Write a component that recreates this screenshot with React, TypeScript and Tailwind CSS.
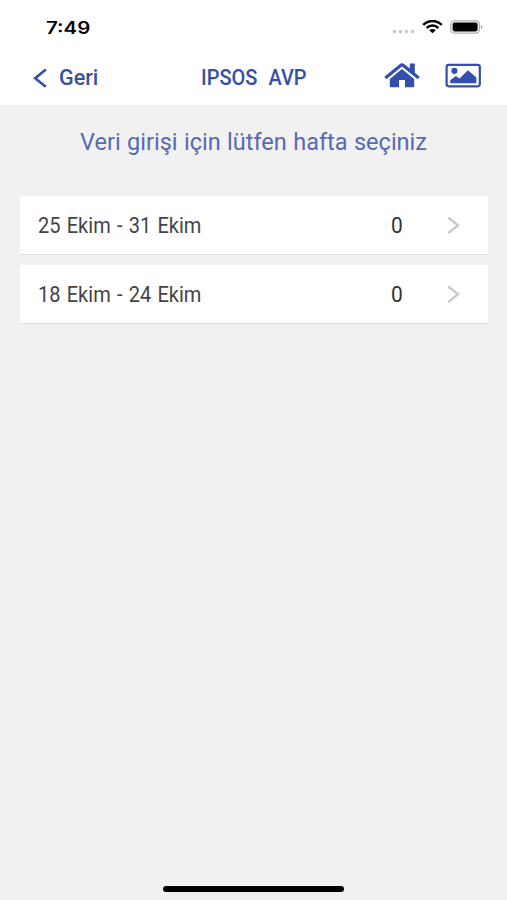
import React from 'react';

const weeks = [
  { label: '25 Ekim - 31 Ekim', count: 0 },
  { label: '18 Ekim - 24 Ekim', count: 0 },
];

function StatusBar() {
  return (
    <div className="flex h-[52px] items-start justify-between pl-[46px] pr-[23px]">
      <span className="mt-[16px] inline-block origin-left scale-x-[1.2] font-['Inter',sans-serif] text-[17px] font-semibold leading-6 text-black">
        7:49
      </span>
      <div className="mt-[20px] flex items-start">
        <svg width="24" height="14" viewBox="0 0 24 14" fill="#c8c8c8">
          <circle cx="2.5" cy="11.6" r="1.8" />
          <circle cx="8.5" cy="11.6" r="1.8" />
          <circle cx="14.5" cy="11.6" r="1.8" />
          <circle cx="20.5" cy="11.6" r="1.8" />
        </svg>
        <svg className="ml-[6px]" width="21" height="14" viewBox="0 0 21 14" fill="none" stroke="#000" strokeWidth="2.5">
          <path d="M1.2 4.9C6.4 -0.3 14.6 -0.3 19.8 4.9" />
          <path d="M4.6 8C8 4.8 13 4.8 16.4 8" />
          <path d="M10.5 13.2L7.2 10.3C9.1 8.7 11.9 8.7 13.8 10.3Z" fill="#000" stroke="none" />
        </svg>
        <svg className="ml-[7px]" width="34" height="14" viewBox="0 0 34 14">
          <rect x="0.8" y="0.8" width="28.6" height="12.4" rx="3.6" fill="#fff" stroke="#b0b0b0" strokeWidth="1.3" />
          <rect x="2.6" y="2.6" width="25" height="8.8" rx="1.8" fill="#000" />
          <path d="M31 5V9C32.6 8.3 32.6 5.7 31 5Z" fill="#999" />
        </svg>
      </div>
    </div>
  );
}

function NavBar() {
  return (
    <div className="grid h-[53px] grid-cols-[1fr_auto_1fr] items-center pb-px text-[#3451a4]">
      <button className="flex items-center pl-[33px]">
        <svg width="14" height="20" viewBox="0 0 14 20" fill="none" stroke="currentColor" strokeWidth="2.7">
          <path d="M12.8 1.5L2.2 10.2L12.8 18.8" />
        </svg>
        <span className="ml-[12px] text-[21.5px] font-medium leading-6">Geri</span>
      </button>
      <h1 className="scale-x-[0.93] whitespace-pre text-[21.5px] font-medium leading-6 [word-spacing:0.6px]">IPSOS  AVP</h1>
      <div className="flex items-start justify-end pr-[26px] pb-[6px] text-[#324fae]">
        <svg width="36" height="25" viewBox="0 0 36 25" fill="currentColor">
          <path d="M18 0.3C17.2 0.3 16.5 0.6 15.9 1.1L0.3 13.7L2.3 16.2L18 3.6L33.7 16.2L35.7 13.7L30.8 9.7V0.5H25.8V5.6L20.1 1.1C19.5 0.6 18.8 0.3 18 0.3Z" />
          <path d="M18 6L5.8 16V23C5.8 23.8 6.4 24.3 7.2 24.3H15V17H21V24.3H28.8C29.6 24.3 30.2 23.8 30.2 23V16Z" />
        </svg>
        <svg className="ml-[25px]" width="36" height="25" viewBox="0 0 36 25" fill="currentColor">
          <rect x="1.6" y="1.9" width="33.2" height="21.4" rx="2.2" fill="none" stroke="currentColor" strokeWidth="2.2" />
          <circle cx="9.4" cy="7.8" r="3.1" />
          <path d="M5.2 20.3V17.3L10.9 12.9L14.5 15.5L22.9 7.3L31.4 14.6V20.3Z" />
        </svg>
      </div>
    </div>
  );
}

export default function App() {
  return (
    <div className="flex h-[900px] w-[507px] flex-col overflow-hidden bg-[#f1f1f1] font-['Roboto',sans-serif]">
      <header className="bg-white">
        <StatusBar />
        <NavBar />
      </header>

      <main className="flex-1 px-5">
        <p className="mt-[22px] whitespace-nowrap text-center text-[23.5px] leading-[30px] [word-spacing:0.6px] text-[#5769b4]">
          Veri girişi için lütfen hafta seçiniz
        </p>

        <ul className="mt-[39px] space-y-[10px]">
          {weeks.map((week) => (
            <li
              key={week.label}
              className="flex h-[59px] w-[468px] items-center border-b border-[#dedede] bg-white pl-[18px] pr-[28px] text-[#444]"
            >
              <span className="flex-1 origin-left scale-x-[0.91] whitespace-nowrap text-[22px] [word-spacing:1.4px]">
                {week.label}
              </span>
              <span className="w-[14px] scale-x-[0.95] text-center text-[22px] text-[#333]">{week.count}</span>
              <svg className="ml-[43px]" width="13" height="18" viewBox="0 0 13 18" fill="none" stroke="#c9c9c9" strokeWidth="2.4">
                <path d="M1.2 1.5L11 9.3L1.2 17.1" />
              </svg>
            </li>
          ))}
        </ul>
      </main>

      <footer className="flex justify-center pb-[8.5px]">
        <div className="h-[6px] w-[181px] rounded-full bg-black" />
      </footer>
    </div>
  );
}
